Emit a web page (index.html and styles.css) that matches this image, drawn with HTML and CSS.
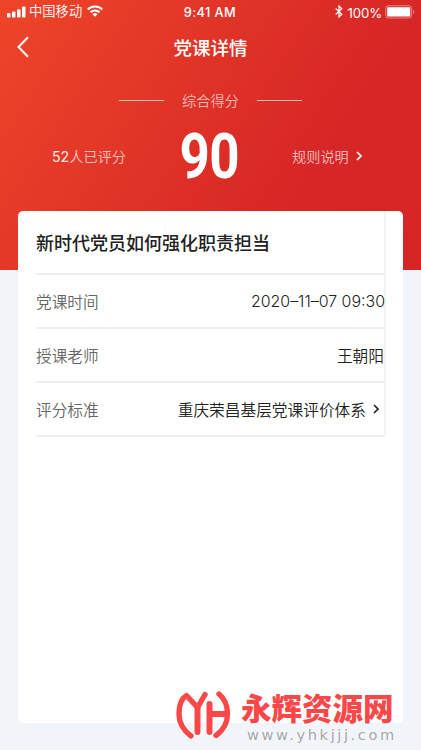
FILE: index.html
```html
<!DOCTYPE html>
<html lang="zh-CN">
<head>
<meta charset="utf-8">
<title>党课详情</title>
<link rel="stylesheet" href="styles.css">
</head>
<body>
<div class="screen">
  <header class="hero">
    <div class="status">
      <div class="status-left">
        <svg class="signal" width="19" height="12" viewBox="0 0 19 12" fill="#fff"><rect x="0" y="7" width="3.5" height="4.5" rx="1"/><rect x="5" y="5.5" width="3.5" height="6" rx="1"/><rect x="10" y="3.3" width="3.5" height="8.2" rx="1"/><rect x="15" y="0.5" width="3.5" height="11" rx="1"/></svg>
        <span class="carrier">中国移动</span>
        <svg class="wifi" width="16" height="12" viewBox="0 0 16 12" fill="none" stroke="#fff" stroke-width="2"><path d="M.8 4.5a10.3 10.3 0 0 1 14.4 0M3.5 7.3a6.5 6.5 0 0 1 9 0"/><path d="M5.5 9.2a3.7 3.7 0 0 1 5 0L8 11.8z" fill="#fff" stroke="none"/></svg>
      </div>
      <div class="clock">9:41 AM</div>
      <div class="status-right">
        <svg class="bluetooth" width="8" height="13" viewBox="0 0 8 13" fill="none" stroke="#fff" stroke-width="1.2"><path d="M.7 3.5l6.1 5.8L4 12V1l2.8 2.7L.7 9.5"/></svg>
        <span class="percent">100%</span>
        <svg class="battery" width="30" height="14" viewBox="0 0 30 14"><rect x=".8" y=".8" width="25.8" height="12.2" rx="2.5" fill="none" stroke="#fff" stroke-opacity=".45"/><rect x="2.2" y="2.2" width="23" height="9.4" rx="1" fill="#fff"/><path d="M28 5v4q1.4-.6 1.4-2T28 5" fill="#fff" fill-opacity=".45"/></svg>
      </div>
    </div>
    <div class="nav">
      <svg class="back" width="12" height="22" viewBox="0 0 12 22" fill="none" stroke="#fff" stroke-width="2"><path d="M11 1.2L1.5 11 11 20.8"/></svg>
      <h1>党课详情</h1>
    </div>
    <div class="caption"><i></i><span>综合得分</span><i></i></div>
    <div class="scores">
      <div class="count"><b>52</b>人已评分</div>
      <div class="score"><span>90</span></div>
      <div class="rules">规则说明<svg width="6" height="10" viewBox="0 0 6 10" fill="none" stroke="#fff" stroke-width="1.7"><path d="M1 1l4 4-4 4"/></svg></div>
    </div>
  </header>
  <main class="card">
    <div class="panel">
      <h2>新时代党员如何强化职责担当</h2>
      <div class="row"><span class="label">党课时间</span><span class="value date">2020–11–07 09:30</span></div>
      <div class="row"><span class="label">授课老师</span><span class="value">王朝阳</span></div>
      <div class="row"><span class="label">评分标准</span><span class="value">重庆荣昌基层党课评价体系<svg class="go" width="6" height="10" viewBox="0 0 6 10" fill="none" stroke="#222" stroke-width="1.7"><path d="M1 1l4 4-4 4"/></svg></span></div>
    </div>
  </main>
  <div class="watermark">
    <svg width="58" height="52" viewBox="0 0 58 52" fill="none" stroke-linecap="round" stroke-linejoin="round">
      <path class="halo" d="M18 47Q6 38 6 25Q6 11 13.500 6.500L24.500 18.500 32 5.500M24.500 18V43M36.500 15V43M36.500 25H54M46 5Q54.500 12 54.500 25Q54.500 38 43 46.500"/>
      <path class="mark" d="M18 47Q6 38 6 25Q6 11 13.500 6.500L24.500 18.500 32 5.500"/>
      <path class="mark stem" d="M24.500 18V43M36.500 15V43M36.500 25H54"/>
      <path class="mark" d="M46 5Q54.500 12 54.500 25Q54.500 38 43 46.500"/>
    </svg>
    <div class="brand"><div class="name">永辉资源网</div><div class="url">www.yhkjjj.com</div></div>
  </div>
</div>
</body>
</html>
```
FILE: styles.css
```css
* { box-sizing: border-box; }
body { margin: 0; font-family: "Noto Sans CJK SC", sans-serif; }
.screen { position: relative; width: 421px; height: 750px; background: #f1f5f9; overflow: hidden; }
svg { display: block; flex: none; }
.hero { height: 270px; color: #fff; background: linear-gradient(123deg, #ee4529 0%, #d62626 72%, #d52525 100%); }
.status { display: grid; grid-template-columns: 1fr auto 1fr; height: 24px; padding: 0 7px; }
.status-left { display: flex; align-items: center; height: 24px; }
.signal { margin-top: -1px; }
.carrier { font-size: 13.3px; line-height: 20px; margin: -2px 5px 0 3px; font-weight: 350; }
.wifi { margin-top: -2px; }
.clock { font: 500 12.8px/26px Inter, sans-serif; letter-spacing: .4px; margin-left: -1px; }
.status-right { display: flex; align-items: center; justify-content: flex-end; margin-top: -2px; }
.bluetooth { margin-top: -2px; }
.percent { font: 400 13.2px/24px Inter, sans-serif; margin: 2px 3px 0 4px; letter-spacing: -.1px; }
.battery { margin: -1px -1px 0 0; }
.nav { display: grid; grid-template-columns: 55px 1fr 55px; align-items: center; height: 46px; }
.back { margin-left: 17px; }
h1 { margin: 0; text-align: center; font-size: 18.5px; line-height: 28px; font-weight: 500; }
.caption { display: flex; justify-content: center; align-items: center; gap: 18px; height: 20px; margin-top: 20px; font-size: 14.2px; font-weight: 350; color: rgba(255,255,255,.68); }
.caption i { width: 45px; height: 1px; background: rgba(255,255,255,.65); }
.scores { display: grid; grid-template-columns: 129px 160px 1fr; align-items: center; height: 66px; margin-top: 13px; font-size: 14.2px; }
.count { padding-left: 52px; white-space: nowrap; font-weight: 350; color: rgba(255,255,255,.7); }
.count b { font: 400 14.2px Inter, sans-serif; color: #fff; opacity: .9; }
.score { display: flex; justify-content: center; }
.score span { font: 700 63px/66px Roboto, sans-serif; transform: translateY(1px) scaleX(.84); letter-spacing: -1px; }
.rules { display: flex; align-items: center; gap: 7px; padding-left: 3px; font-weight: 350; color: rgba(255,255,255,.7); }
.card { width: 385px; height: 512px; margin: -59px 0 0 18px; padding-left: 18px; background: #fff; border-radius: 5px; position: relative; }
.panel { width: 350px; height: 226px; border-right: 2px solid #f5f5f5; }
h2 { margin: 0; height: 64px; border-bottom: 2px solid #eee; font-size: 18px; line-height: 63px; font-weight: 500; color: #222; white-space: nowrap; }
.row { display: flex; justify-content: space-between; align-items: center; height: 54px; border-bottom: 2px solid #eee; font-size: 15.7px; white-space: nowrap; }
.label { color: #666; font-weight: 350; }
.value { display: flex; align-items: center; color: #222; font-weight: 350; }
.date { font-family: Inter, sans-serif; font-size: 15.95px; font-weight: 350; margin-right: -1px; padding-top: 1px; }
.go { margin: 0 5px 0 7px; }
.watermark { position: absolute; left: 173px; top: 689px; display: flex; }
.halo { stroke: #fff; stroke-width: 8; }
.mark { stroke: #fa4849; stroke-width: 5.4; }
.stem { stroke-width: 6; }
.brand { margin-left: 10px; }
.name { height: 37px; font-size: 30.5px; line-height: 37px; font-weight: 900; color: #fa4849; white-space: nowrap; text-shadow: 0 0 2px #fff; }
.url { font: 14.6px/18px "DejaVu Sans", sans-serif; letter-spacing: 2.6px; color: #a3a5a7; margin-left: 6px; white-space: nowrap; text-shadow: 0 0 2px #fff, 0 0 2px #fff; }
```
